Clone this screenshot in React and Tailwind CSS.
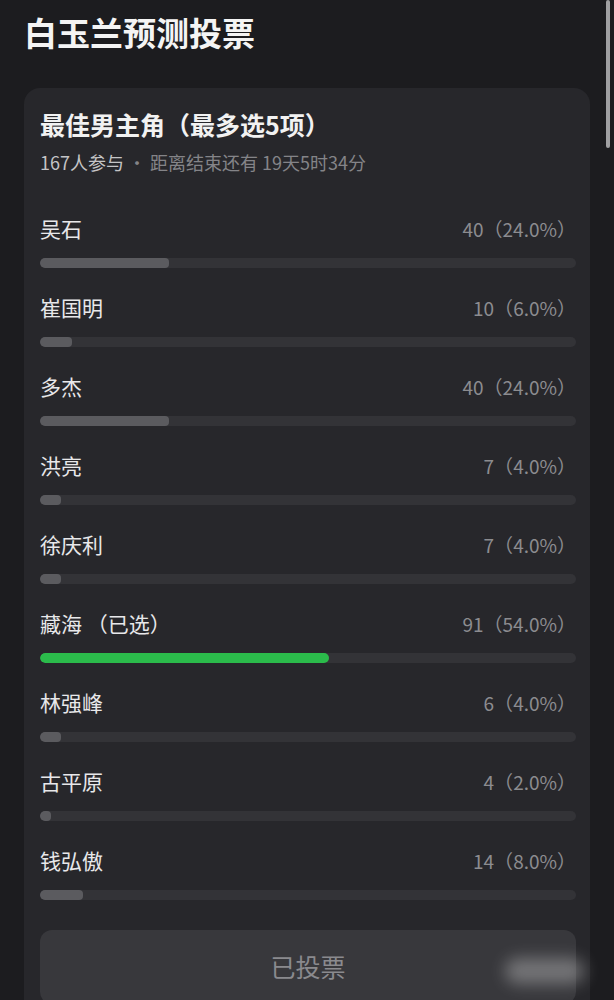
import React from 'react';

const candidates = [
  { name: '吴石', votes: 40, pct: 24 },
  { name: '崔国明', votes: 10, pct: 6 },
  { name: '多杰', votes: 40, pct: 24 },
  { name: '洪亮', votes: 7, pct: 4 },
  { name: '徐庆利', votes: 7, pct: 4 },
  { name: '藏海', votes: 91, pct: 54, selected: true },
  { name: '林强峰', votes: 6, pct: 4 },
  { name: '古平原', votes: 4, pct: 2 },
  { name: '钱弘傲', votes: 14, pct: 8 },
];

function OptionRow({ item }) {
  return (
    <div className="pb-[25px]">
      <div className="flex items-center justify-between h-[30px]">
        <span className="text-[21px] text-[#e8e8ea]">
          {item.name}
          {item.selected && <span> （已选）</span>}
        </span>
        <span className="text-[19px] text-[#8c8c90]">
          {item.votes}（{item.pct.toFixed(1)}%）
        </span>
      </div>
      <div className="mt-[14px] h-[10px] w-full rounded-full bg-[#333337] overflow-hidden">
        <div
          className={item.selected ? 'h-full rounded-full bg-[#2bbb4b]' : 'h-full rounded-sm bg-[#5b5b5f]'}
          style={{ width: `${item.pct}%` }}
        />
      </div>
    </div>
  );
}

export default function App() {
  return (
    <div
      className="relative h-[1000px] overflow-hidden bg-[#1c1c1f]"
      style={{ fontFamily: '"Noto Sans CJK SC", "Noto Sans", sans-serif' }}
    >
      {/* scrollbar */}
      <div className="absolute right-[4px] top-0 h-[148px] w-[4px] rounded-full bg-[#a0a0a2]" />

      <h1 className="pt-3 pl-6 text-[33px] leading-[40px] font-bold text-[#f4f4f4]">白玉兰预测投票</h1>

      <div className="mx-6 mt-9 rounded-2xl bg-[#27272b] pt-5 pl-4 pr-[14px] pb-10">
        <h2 className="text-[25px] leading-[32px] font-bold text-[#f2f2f2]">最佳男主角（最多选5项）</h2>
        <p className="mt-[10px] text-[18px] leading-[24px] text-[#848488]">
          <span className="text-[#c4c4c6]">167人参与</span> · 距离结束还有 19天5时34分
        </p>

        <div className="mt-10">
          {candidates.map((c) => (
            <OptionRow key={c.name} item={c} />
          ))}
        </div>

        <div className="mt-[5px] flex h-[74px] items-center justify-center rounded-xl bg-[#38383c]">
          <span className="text-[25px] text-[#8a8a8e]">已投票</span>
        </div>
      </div>

      {/* blurred watermark */}
      <div className="absolute left-[505px] top-[958px] h-[26px] w-[80px] rounded-full bg-white/30 blur-sm" />
    </div>
  );
}
